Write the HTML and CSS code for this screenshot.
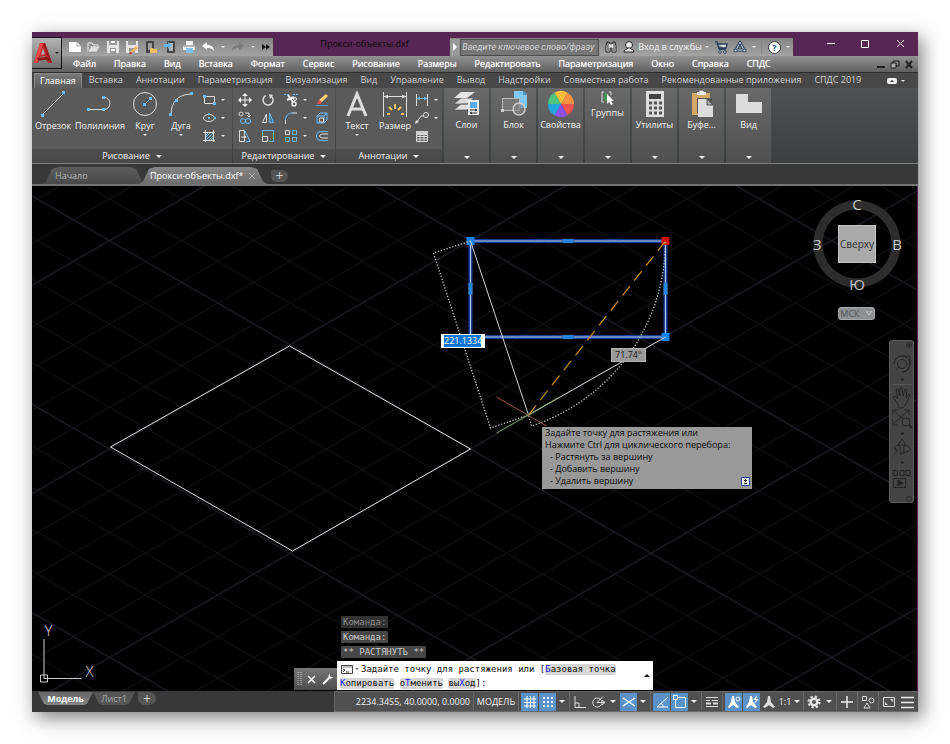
FILE: index.html
```html
<!DOCTYPE html>
<html lang="ru">
<head>
<meta charset="utf-8">
<title>Прокси-объекты.dxf</title>
<link rel="stylesheet" href="styles.css">
</head>
<body>
<div class="window">
  <header class="header">
    <button class="app-button" aria-label="Меню приложения">
      <svg width="20" height="24" viewBox="0 0 20 24"><path d="M7 2h5l7 20h-4l-3-7-5 1-2 6H1z" fill="#c4272b"/><path d="M7 2l3 1-6 19H1z" fill="#ee4a46"/><path d="M10 7l2 6-4 1z" fill="#a9a9a9"/><path d="M4 17c5 0 9-2 13 0l2 5c-4-4-9-3-13-2z" fill="#8e1519"/><path d="M12 2l7 20h-2L10 3z" fill="#951a1e"/></svg>
      <i class="caret dark"></i>
    </button>
    <div class="titlebar">
      <div class="quick">
        <button aria-label="Создать"><svg width="14" height="14" viewBox="0 0 14 14"><path d="M1 2h8l4 4v6H1z" fill="#fff"/><path d="M9 2v4h4" fill="none" stroke="#aaa"/></svg></button>
        <button aria-label="Открыть"><svg width="14" height="14" viewBox="0 0 14 14"><path d="M1 12V3h4l1 2h5v2" fill="none" stroke="#eee"/><path d="M1 12l3-6h9l-3 6z" fill="#ddd" stroke="#888" stroke-width=".5"/></svg></button>
        <button aria-label="Сохранить"><svg width="14" height="14" viewBox="0 0 14 14"><path d="M1 1h12v12H1z" fill="#e4e4e4"/><path d="M3 1h8v4H3zM4 8h6v5H4z" fill="#999"/><path d="M5 2h4M5 10h4" stroke="#fff" stroke-width="2"/></svg></button>
        <button aria-label="Сохранить как"><svg width="14" height="14" viewBox="0 0 14 14"><path d="M1 1h12v12H1z" fill="#e4e4e4"/><path d="M3 1h8v4H3zM4 8h6v5H4z" fill="#999"/><path d="M5 12l6-6 2 2-6 5z" fill="#f0b45c"/><path d="M5 12l2 1-1 1H4z" fill="#b33"/></svg></button>
        <button aria-label="Открыть с мобильных"><svg width="14" height="14" viewBox="0 0 14 14"><rect x="2" y="1" width="8" height="12" rx="1" fill="#444"/><path d="M4 3h4v7H4z" fill="#999"/><path d="M6 12V8h3l1 1h3v4H6z" fill="#f0bd62"/></svg></button>
        <button aria-label="Сохранить на мобильных"><svg width="14" height="14" viewBox="0 0 14 14"><rect x="4" y="1" width="8" height="12" rx="1" fill="#444"/><path d="M6 3h4v8H6z" fill="#b5b5b5"/><path d="M1 4h4V2l4 3-4 4V7H1z" fill="#5fb6f5"/></svg></button>
        <button aria-label="Печать"><svg width="14" height="14" viewBox="0 0 14 14"><path d="M4 1h7v4H4zM1 5h12v5H1z" fill="#f2f2f2"/><path d="M1 6h12" stroke="#777"/><path d="M4 8h7v5H4z" fill="#81c5f7"/></svg></button>
        <button aria-label="Отменить"><svg width="14" height="14" viewBox="0 0 14 14"><path d="M1 6l5-4v3c4 0 7 2 7 6-2-3-4-3-7-3v2z" fill="#fff"/></svg></button><i class="caret"></i>
        <button aria-label="Повторить"><svg width="14" height="14" viewBox="0 0 14 14"><path d="M13 6L8 2v3C4 5 1 7 1 11c2-3 4-3 7-3v2z" fill="#7c7c7c"/></svg></button><i class="caret"></i>
        <button aria-label="Ещё"><svg width="10" height="10" viewBox="0 0 10 10"><path d="M1 2l4 3-4 3zM5 2l4 3-4 3z" fill="#111"/></svg></button>
      </div>
      <h1 class="title">Прокси-объекты.dxf</h1>
      <div class="search">
        <button class="search-toggle" aria-label="Свернуть поиск"><svg width="5" height="8" viewBox="0 0 5 8"><path d="M0 0l4 4-4 4z" fill="#fff"/></svg></button>
        <input type="text" aria-label="Поиск" placeholder="Введите ключевое слово/фразу">
        <button aria-label="Найти"><svg width="14" height="14" viewBox="0 0 14 14"><path d="M2 6l1-4h2l1 2h2l1-2h2l1 4v6H8V8H6v4H2z" fill="#eee" stroke="#222"/><path d="M4 2v9M10 2v9" stroke="#222"/></svg></button>
        <button class="signin"><svg width="12" height="14" viewBox="0 0 12 14"><circle cx="6" cy="5" r="3.5" fill="#eee" stroke="#222"/><path d="M1 12c0-3 3-2 4-4h2c1 2 4 1 4 4z" fill="#eee" stroke="#222"/></svg><span>Вход в службы</span><i class="caret"></i></button>
        <button aria-label="Магазин"><svg width="14" height="14" viewBox="0 0 14 14"><path d="M1 2h2l2 7h7M4 4h9l-1 4H5" fill="#e5e5e5" stroke="#273a55" stroke-width="1.3"/><circle cx="6" cy="12" r="1.3" fill="#eee" stroke="#273a55"/><circle cx="11" cy="12" r="1.3" fill="#eee" stroke="#273a55"/></svg></button>
        <button aria-label="Autodesk"><svg width="14" height="14" viewBox="0 0 14 14"><path d="M7 3l4 7H3z" fill="none" stroke="#273a55" stroke-width="3"/><path d="M7 3l4 7H3z" fill="none" stroke="#dce5f2"/><circle cx="7" cy="3" r="1.5" fill="#dce5f2" stroke="#273a55"/><circle cx="2.500" cy="10.500" r="1.500" fill="#dce5f2" stroke="#273a55"/><circle cx="11.500" cy="10.500" r="1.500" fill="#dce5f2" stroke="#273a55"/></svg><i class="caret"></i></button>
        <button class="help" aria-label="Справка"><span>?</span><i class="caret"></i></button>
      </div>
      <div class="window-controls">
        <button aria-label="Свернуть"><svg width="9" height="9" viewBox="0 0 9 9"><path d="M1 3.500h8" stroke="#fff"/></svg></button>
        <button aria-label="Развернуть"><svg width="9" height="9" viewBox="0 0 9 9"><path d="M.5.5h7v7h-7z" fill="none" stroke="#fff"/></svg></button>
        <button aria-label="Закрыть"><svg width="9" height="9" viewBox="0 0 9 9"><path d="M1 0l7 7M8 0L1 7" stroke="#fff"/></svg></button>
      </div>
    </div>
    <nav class="menubar">
      <a href="#">Файл</a><a href="#">Правка</a><a href="#">Вид</a><a href="#">Вставка</a><a href="#">Формат</a><a href="#">Сервис</a><a href="#">Рисование</a><a href="#">Размеры</a><a href="#">Редактировать</a><a href="#">Параметризация</a><a href="#">Окно</a><a href="#">Справка</a><a href="#">СПДС</a>
      <div class="doc-controls">
        <button aria-label="Свернуть документ"><svg width="8" height="9" viewBox="0 0 8 9"><path d="M0 7h8" stroke="#222" stroke-width="2"/></svg></button>
        <button aria-label="Восстановить документ"><svg width="10" height="9" viewBox="0 0 10 9"><path d="M3 3V1h6v5H6" fill="none" stroke="#222"/><path d="M1 3h5v5H1z" fill="#aaa" stroke="#222"/></svg></button>
        <button aria-label="Закрыть документ"><svg width="8" height="9" viewBox="0 0 8 9"><path d="M1 1l6 7M7 1L1 8" stroke="#222" stroke-width="2"/></svg></button>
      </div>
    </nav>
  </header>

  <nav class="ribbon-tabs">
    <a class="active" href="#">Главная</a><a href="#">Вставка</a><a href="#">Аннотации</a><a href="#">Параметризация</a><a href="#">Визуализация</a><a href="#">Вид</a><a href="#">Управление</a><a href="#">Вывод</a><a href="#">Надстройки</a><a href="#">Совместная работа</a><a href="#">Рекомендованные приложения</a><a href="#">СПДС 2019</a>
    <button aria-label="Свернуть ленту"><svg width="10" height="6" viewBox="0 0 10 6"><rect width="10" height="6" rx="2" fill="#eee"/><path d="M3 4l2-2 2 2z" fill="#333"/></svg><i class="caret"></i></button>
  </nav>

  <section class="ribbon">
    <div class="panel draw">
      <div class="panel-body">
        <button class="tool w42"><svg width="26" height="26" viewBox="0 0 26 26"><path d="M2 24L24 2" stroke="#ddd"/><path d="M1 23h3v3H1zM22 0h3v3h-3z" fill="#6bbcff"/></svg><span>Отрезок</span></button>
        <button class="tool w52"><svg width="26" height="26" viewBox="0 0 26 26"><path d="M1 18.500h16a6 6 0 0 0 0-12" fill="none" stroke="#ddd"/><path d="M0 17h3v3H0zM15 17h3v3h-3zM15 5h3v3h-3z" fill="#6bbcff"/></svg><span>Полилиния</span></button>
        <button class="tool w38"><svg width="26" height="26" viewBox="0 0 26 26"><circle cx="13" cy="13" r="11.500" fill="none" stroke="#ddd"/><path d="M13 13l6-6" stroke="#6bbcff"/><path d="M11 12h3v3h-3zM17 6h3v3h-3z" fill="#6bbcff"/></svg><span>Круг</span><i class="caret"></i></button>
        <button class="tool w34"><svg width="26" height="26" viewBox="0 0 26 26"><path d="M3 24C3 11 10 3 24 3" fill="none" stroke="#ddd"/><path d="M1 22h3v3H1zM7 8h3v3H7zM22 1h3v3h-3z" fill="#6bbcff"/></svg><span>Дуга</span><i class="caret"></i></button>
        <div class="small-tools one">
          <button aria-label="Прямоугольник"><svg width="14" height="14" viewBox="0 0 14 14"><path d="M2.500 3.500h10v7h-10z" fill="none" stroke="#ddd"/><path d="M1 2h3v3H1zM11 9h3v3h-3z" fill="#6bbcff"/></svg><i class="caret"></i></button>
          <button aria-label="Эллипс"><svg width="14" height="14" viewBox="0 0 14 14"><ellipse cx="7" cy="7" rx="5.500" ry="3.500" fill="none" stroke="#ddd"/><path d="M6 6h2v2H6zM6 2h2v2H6zM12 6h2v2h-2z" fill="#6bbcff"/></svg><i class="caret"></i></button>
          <button aria-label="Штриховка"><svg width="14" height="14" viewBox="0 0 14 14"><path d="M3.500 1v12M11.500 1v12M1 3.500h12M1 11.500h12" stroke="#ddd"/><path d="M4 8l4-4M4 11l7-7M7 11l4-4M4 6l2-2M9 11l2-2" stroke="#6bbcff"/></svg><i class="caret"></i></button>
        </div>
      </div>
      <button class="panel-foot">Рисование<i class="caret big"></i></button>
    </div>

    <div class="panel edit">
      <div class="panel-body">
        <div class="small-tools four">
          <button aria-label="Переместить"><svg width="14" height="14" viewBox="0 0 14 14"><path d="M7 2v10M2 7h10" stroke="#eee"/><path d="M7 0l3 3H4zM7 14l3-3H4zM0 7l3-3v6zM14 7l-3-3v6z" fill="#eee"/></svg></button>
          <button aria-label="Повернуть"><svg width="14" height="14" viewBox="0 0 14 14"><path d="M10 3a5 5 0 1 1-5-.5" fill="none" stroke="#ddd" stroke-width="1.5"/><path d="M8 1l4 1-3 4z" fill="#ddd"/></svg></button>
          <button aria-label="Обрезать"><svg width="14" height="14" viewBox="0 0 14 14"><path d="M0 1.500h5M9 1.500h5" stroke="#6bbcff" stroke-dasharray="2 1"/><path d="M4 2l5 7M10 4L3 7" stroke="#eee" stroke-width="2"/><circle cx="10" cy="11" r="2" fill="none" stroke="#eee" stroke-width="1.500"/><circle cx="11" cy="6" r="1.500" fill="none" stroke="#eee"/></svg><i class="caret"></i></button>
          <button aria-label="Стереть"><svg width="14" height="14" viewBox="0 0 14 14"><path d="M11 1l2 2-6 6-3-2z" fill="#ffd07a"/><path d="M4 7l3 2-2 2H2z" fill="#f05050"/><path d="M1 12.500h12" stroke="#5c9ed4"/></svg></button>
          <button aria-label="Копировать"><svg width="14" height="14" viewBox="0 0 14 14"><circle cx="3" cy="3" r="2" fill="none" stroke="#ddd"/><path d="M7 2h4v4M9 4l2 2 2-2" fill="none" stroke="#ddd"/><circle cx="5" cy="10" r="2.500" fill="none" stroke="#6bbcff"/><circle cx="10" cy="10" r="2.500" fill="none" stroke="#6bbcff"/></svg></button>
          <button aria-label="Зеркало"><svg width="14" height="14" viewBox="0 0 14 14"><path d="M5.500 3v8.500h-4z" fill="none" stroke="#ddd"/><path d="M8.500 2v9.500h4z" fill="#3e6d94" stroke="#6bbcff"/></svg></button>
          <button aria-label="Сопряжение"><svg width="14" height="14" viewBox="0 0 14 14"><path d="M1.500 13V9" stroke="#ddd"/><path d="M1.500 9c0-4 3-7 7-7" fill="none" stroke="#6bbcff"/><path d="M8 2h5" stroke="#ddd"/></svg><i class="caret"></i></button>
          <button aria-label="Расчленить"><svg width="14" height="14" viewBox="0 0 14 14"><path d="M2 5h7v7H2zM2 5l3-3h7l-3 3M12 2v7l-3 3" fill="none" stroke="#6bbcff"/><path d="M4.500 7h4v4h-4z" fill="none" stroke="#ddd"/></svg></button>
          <button aria-label="Растянуть"><svg width="14" height="14" viewBox="0 0 14 14"><path d="M1.500 1.500h5v11h-5z" fill="none" stroke="#ddd"/><path d="M7 2l5 10.500H8" fill="none" stroke="#6bbcff"/><path d="M3 8h5M6 6l2 2-2 2" fill="none" stroke="#ddd"/></svg></button>
          <button aria-label="Масштаб"><svg width="14" height="14" viewBox="0 0 14 14"><path d="M1.500 7V1.500h11v11H8" fill="none" stroke="#6bbcff"/><path d="M1.500 7.500h5v5h-5z" fill="none" stroke="#ddd"/></svg></button>
          <button aria-label="Массив"><svg width="14" height="14" viewBox="0 0 14 14"><path d="M1.500 1.500h4v4h-4z" fill="none" stroke="#ddd"/><path d="M8.500 1.500h4v4h-4zM1.500 8.500h4v4h-4zM8.500 8.500h4v4h-4z" fill="none" stroke="#6bbcff"/></svg><i class="caret"></i></button>
          <button aria-label="Подобие"><svg width="14" height="14" viewBox="0 0 14 14"><path d="M13 2.500H6c-6 0-6 9 0 9h7" fill="none" stroke="#6bbcff"/><path d="M13 5H7c-3 0-3 4 0 4h6" fill="none" stroke="#ddd"/></svg></button>
        </div>
      </div>
      <button class="panel-foot">Редактирование<i class="caret big"></i></button>
    </div>

    <div class="panel annot">
      <div class="panel-body">
        <button class="tool w38"><svg width="26" height="26" viewBox="0 0 26 26"><path d="M4 25L13 3l9 22M7 18h12" fill="none" stroke="#ddd" stroke-width="3"/></svg><span>Текст</span><i class="caret"></i></button>
        <button class="tool w38"><svg width="26" height="26" viewBox="0 0 26 26"><path d="M1.500 1v25M24.500 1v25M2 5.500h22" stroke="#ddd"/><path d="M2 5.500l4-2v4zM24 5.500l-4-2v4z" fill="#ddd"/><path d="M5 23h3M19 23h3M7 16l3 3M19 16l-3 3M13 13v5" stroke="#ffc564" stroke-width="2"/></svg><span>Размер</span></button>
        <div class="small-tools one">
          <button aria-label="Линейный размер"><svg width="14" height="14" viewBox="0 0 14 14"><path d="M1.500 1v12M12.500 1v12" stroke="#ddd"/><path d="M2 5.500h10" stroke="#6bbcff"/><path d="M2 5.500l3-2v4zM12 5.500l-3-2v4z" fill="#6bbcff"/></svg><i class="caret"></i></button>
          <button aria-label="Выноска"><svg width="14" height="14" viewBox="0 0 14 14"><path d="M2 11l4-6h3" fill="none" stroke="#ddd"/><circle cx="11" cy="4" r="2.500" fill="none" stroke="#ddd"/><path d="M0 13l1-4 3 2z" fill="#ddd"/></svg><i class="caret"></i></button>
          <button aria-label="Таблица"><svg width="14" height="14" viewBox="0 0 14 14"><path d="M1.500 2.500h11v10h-11zM1 5.500h12M1 7.500h12M1 10h12M5 5v7M9 5v7" fill="none" stroke="#ddd"/><path d="M1 2h12v3H1z" fill="#ccc"/></svg></button>
        </div>
      </div>
      <button class="panel-foot">Аннотации<i class="caret big"></i></button>
    </div>

    <button class="group"><svg width="28" height="28" viewBox="0 0 28 28"><path d="M8 14h13l-7 6H1zM8 8h13l-7 6H1z" fill="#ddd" stroke="#555" stroke-width=".7"/><path d="M8 2h14l-8 6H1z" fill="#e5e5e5"/><path d="M15 10h11v15H15z" fill="#eee"/><path d="M17 12h7v6h-7z" fill="#58aef0"/><path d="M17 20h7M22 19l2 1-2 1M24 23h-7M19 22l-2 1 2 1" stroke="#333" fill="none"/></svg><span>Слои</span><i class="caret big"></i></button>
    <button class="group"><svg width="28" height="28" viewBox="0 0 28 28"><path d="M14 1h9l4 4v13H14z" fill="#80c9fa"/><path d="M23 1v4h4" fill="#4a95c9"/><path d="M2.500 8.500h17v12h-17z" fill="#777" stroke="#bbb"/><circle cx="19" cy="19" r="6" fill="#888a" stroke="#ccc" stroke-width="1.500"/><path d="M1 19h3v3H1z" fill="#ccc"/></svg><span>Блок</span><i class="caret big"></i></button>
    <button class="group"><svg width="28" height="28" viewBox="0 0 28 28"><path d="M14 14L7.500 2.700a13 13 0 0 1 13 0z" fill="#f9bd3e"/><path d="M14 14l6.500-11.300A13 13 0 0 1 27 14z" fill="#fb9040"/><path d="M14 14h13a13 13 0 0 1-6.500 11.300z" fill="#ee5350"/><path d="M14 14l6.500 11.300a13 13 0 0 1-13 0z" fill="#8e50e8"/><path d="M14 14L7.500 25.300A13 13 0 0 1 1 14z" fill="#21a5de"/><path d="M14 14H1A13 13 0 0 1 7.500 2.700z" fill="#4fc47b"/></svg><span>Свойства</span><i class="caret big"></i></button>
    <button class="group"><svg width="16" height="16" viewBox="0 0 16 16"><path d="M4 2H2v10h2M9 2h2v3" fill="none" stroke="#ddd"/><circle cx="6" cy="5" r="2" fill="#3d9c59"/><circle cx="6" cy="9" r="2" fill="#3d9c59"/><path d="M7 4v10l2-2 2 3 2-1-2-3h3z" fill="#fff"/></svg><span>Группы</span><i class="caret big"></i></button>
    <button class="group"><svg width="28" height="28" viewBox="0 0 28 28"><path d="M5 1h18v26H5z" fill="#ddd"/><path d="M8 4h12v5H8z" fill="#444"/><path d="M8 13h3M13 13h3M18 13h3M8 18h3M13 18h3M18 18h3M8 23h3M13 23h3M18 23h3" stroke="#555" stroke-width="3"/></svg><span>Утилиты</span><i class="caret big"></i></button>
    <button class="group"><svg width="28" height="28" viewBox="0 0 28 28"><path d="M4 3h18v22H4z" fill="#d6a666"/><path d="M9 5V2h2c1-2 4-2 5 0h2v3z" fill="#eee"/><path d="M9 8h15v15H9z" fill="#555"/><path d="M10 9h9l6 6v12H10z" fill="#ddd"/><path d="M19 9v6h6z" fill="#aaa" stroke="#555"/></svg><span>Буфе...</span><i class="caret big"></i></button>
    <button class="group"><svg width="28" height="28" viewBox="0 0 28 28"><path d="M1 4h12v8h14v11H1z" fill="#dcdcdc"/></svg><span>Вид</span><i class="caret big"></i></button>
  </section>

  <nav class="file-tabs">
    <a class="file-tab" href="#">Начало</a>
    <a class="file-tab active" href="#">Прокси-объекты.dxf*<svg width="6" height="6" viewBox="0 0 6 6"><path d="M0 0l6 6M6 0L0 6" stroke="#aaa"/></svg></a>
    <button class="add-file" aria-label="Новый чертёж">+</button>
  </nav>

  <main class="viewport">
    <svg class="drawing" viewBox="32 186 886 505" preserveAspectRatio="xMidYMid slice">
      <defs>
        <pattern id="minor" x="471" y="449" width="72.200" height="41.680" patternUnits="userSpaceOnUse"><path d="M0 0L72.200 41.680M0 41.680L72.200 0" stroke="#121217"/></pattern>
        <pattern id="major" x="471" y="449" width="361" height="208.400" patternUnits="userSpaceOnUse"><path d="M0 0L361 208.400M0 208.400L361 0" stroke="#1f1f2b"/></pattern>
      </defs>
      <rect x="32" y="186" width="886" height="505" fill="url(#minor)"/>
      <rect x="32" y="186" width="886" height="505" fill="url(#major)"/>
      <path d="M290 346L471 449 293 551 111 447z" fill="none" stroke="#e2e2e2"/>
      <path d="M471 241h195v96H471z" fill="none" stroke="#1b3f8e" stroke-width="4"/>
      <path d="M471 241h195v96H471z" fill="none" stroke="#b9d0f5"/>
      <path d="M563 239h11v4h-11zM563 335h11v4h-11zM469 283h4v12h-4zM664 283h4v12h-4z" fill="#2188e6" stroke="#456" stroke-width=".5"/>
      <path d="M467 237h8v8h-8zM662 333h8v8h-8z" fill="#1583ee"/>
      <path d="M662 237h8v8h-8z" fill="#d50b0b"/>
      <path d="M471 241l58 174 137-78" fill="none" stroke="#d5d5d5"/>
      <path d="M529 415L666 241" stroke="#c08a20" stroke-width="1.300" stroke-dasharray="12 7"/>
      <path d="M471 241l-37 12 57 175 38-13 3 11A195 195 0 0 0 666 241" fill="none" stroke="#c4c4c4" stroke-width="1.300" stroke-dasharray="1.300 1.700"/>
      <path d="M497 397l50 29" stroke="#9a5d4b"/>
      <path d="M497 433l63-36" stroke="#7e9c67"/>
      <path d="M44.500 639v39M44 678.500h38M41 675h7v7h-7z" fill="none" stroke="#ccc"/>
      <text class="axis" x="45" y="636">Y</text>
      <text class="axis" x="86" y="677">X</text>
    </svg>

    <div class="viewcube">
      <b class="north">С</b><b class="west">З</b><button>Сверху</button><b class="east">В</b><b class="south">Ю</b>
    </div>
    <button class="ucs">МСК<svg width="8" height="5" viewBox="0 0 8 5"><path d="M1 0h6L4 4z" fill="none" stroke="#c5c9d0"/></svg></button>

    <div class="navbar">
      <svg viewBox="0 0 24 162" width="24" height="162" fill="none" stroke="#262626">
        <circle cx="19" cy="4" r="2.500"/><path d="M18 3l2 2M20 3l-2 2"/>
        <path d="M4 23a8 8 0 1 1 8 8M12 15h8v8a8 8 0 0 1-8 8"/><circle cx="12" cy="23" r="4.500"/><path d="M9 26l-3 3"/>
        <path d="M11 38h3l-1.500 2zM11 92h3l-1.500 2zM11 121h3l-1.500 2z" fill="#222"/><path d="M2 43.500h20" stroke="#555"/>
        <path d="M8 63l-5-7 2-1 3 3-2-9 2-1 2 7 0-8h2l1 8 2-7 2 1-1 8 3-4 1 1-4 9-3 4H9z"/>
        <path d="M4 70l14 12M18 70L3 83M3 74v-5h5M14 69h5v5M3 79v5h5"/><circle cx="16" cy="81" r="4" fill="#454545"/><path d="M19 84l3 3" stroke-width="2"/>
        <path d="M10 113v-9H8l4-6 4 6h-2v9zM8 110c-10-4 4-9 11-4 4 4-4 6-8 5M4 106l4 4-4 3"/>
        <path d="M3.500 129.500h4v5h-4zM10 129.500h4v5h-4zM16 129.500h4v5h-4zM3.500 137.500h12v9h-12z"/><path d="M8 139l5 3-5 3z" fill="#222"/><circle cx="19" cy="158" r="2.500"/>
      </svg>
    </div>

    <label class="distance"><input type="text" value="221.1334" aria-label="Расстояние"></label>
    <output class="angle">71.74°</output>
    <div class="hint">
      <p>Задайте точку для растяжения или</p>
      <p>Нажмите Ctrl для циклического перебора:</p>
      <ul><li>- Растянуть за вершину</li><li>- Добавить вершину</li><li>- Удалить вершину</li></ul>
      <svg width="9" height="9" viewBox="0 0 9 9"><path d="M.5.5h8v8h-8z" fill="#eee" stroke="#25408c"/><path d="M4.500 2v3M3 3.500h3M3 6.500h3" stroke="#222"/></svg>
    </div>

    <div class="console">
      <div class="console-handle">
        <svg width="5" height="14" viewBox="0 0 5 14"><path d="M1 0v14M4 0v14" stroke="#ccc" stroke-dasharray="1 1"/></svg>
        <button aria-label="Закрыть"><svg width="9" height="9" viewBox="0 0 9 9"><path d="M1 1l7 7M8 1L1 8" stroke="#fff" stroke-width="1.500"/></svg></button>
        <button aria-label="Настройка"><svg width="12" height="12" viewBox="0 0 12 12"><path d="M1 11l6-6" stroke="#fff" stroke-width="2"/><path d="M8 1c-2 1-2 3-1 4s3 1 4-1L9 4 8 3z" fill="#fff"/></svg></button>
      </div>
      <div class="console-main">
        <span class="log faded">Команда:</span>
        <span class="log">Команда:</span>
        <span class="log">** РАСТЯНУТЬ **</span>
        <div class="prompt">
          <p><svg width="20" height="10" viewBox="0 0 20 10"><path d="M.5.500h11v8H.500z" fill="#fff" stroke="#444"/><path d="M1 2h10" stroke="#888"/><path d="M2 4l2 1-2 2M5 7h3" fill="none" stroke="#333"/><path d="M14 3h4l-2 2z" fill="#777"/></svg>Задайте точку для растяжения или [<button><em>Б</em>азовая точка</button> <button><em>К</em>опировать</button> <button>о<em>Т</em>менить</button> <button>вы<em>Х</em>од</button>]:</p>
          <button class="expand" aria-label="История"><i class="caret up"></i></button>
        </div>
      </div>
    </div>
  </main>

  <footer class="statusbar">
    <nav class="layouts"><a class="active" href="#">Модель</a><a href="#">Лист1</a><button aria-label="Новый лист">+</button></nav>
    <div class="status">
      <div class="cell coords">2234.3455, 40.0000, 0.0000</div>
      <div class="cell"><button class="model">МОДЕЛЬ</button></div>
      <div class="cell">
        <button class="on" aria-label="Сетка"><svg width="14" height="14" viewBox="0 0 14 14"><path d="M4 1v12M7.500 1v12M11 1v12M1 4h12M1 7.500h12M1 11h12" stroke="#fff"/></svg></button>
        <button class="on" aria-label="Шаг"><svg width="14" height="14" viewBox="0 0 14 14"><path d="M2 3h12M2 7h12M2 11h12" stroke="#fff" stroke-width="2" stroke-dasharray="2 2"/></svg></button>
        <button class="drop" aria-label="Параметры шага"><i class="caret big"></i></button>
      </div>
      <div class="cell">
        <button aria-label="Орто"><svg width="14" height="14" viewBox="0 0 14 14"><path d="M2 1v11.500h11M2 8h4v4" fill="none" stroke="#ddd"/></svg></button>
        <button aria-label="Полярное"><svg width="14" height="14" viewBox="0 0 14 14"><path d="M9 4a4.500 4.500 0 1 0 1 6M6 7.500h8M6 7.500l6-6M9 4c2 1 3 4 1 6M11 5l3 2.500-3 2.500" fill="none" stroke="#ddd"/></svg></button>
        <button class="drop" aria-label="Углы"><i class="caret big"></i></button>
        <button class="on" aria-label="Изометрия"><svg width="14" height="14" viewBox="0 0 14 14"><path d="M1 3l12 8M13 3L1 11" stroke="#fff" stroke-width="1.500"/></svg></button>
        <button class="drop" aria-label="Плоскость"><i class="caret big"></i></button>
      </div>
      <div class="cell">
        <button class="on" aria-label="Отслеживание"><svg width="14" height="14" viewBox="0 0 14 14"><path d="M13 2L2 12h11M6 8l3 4" fill="none" stroke="#fff"/></svg></button>
        <button class="on" aria-label="Привязка"><svg width="14" height="14" viewBox="0 0 14 14"><path d="M2.500 2.500h10v10h-10z" fill="none" stroke="#fff"/><path d="M.5.5h4v4h-4z" fill="#5b92c9" stroke="#fff"/></svg></button>
        <button class="drop" aria-label="Параметры привязки"><i class="caret big"></i></button>
      </div>
      <div class="cell"><button aria-label="Вес линий"><svg width="14" height="14" viewBox="0 0 14 14"><path d="M1 2.500h12M1 5.500h4M7 5.500h6M1 11.500h12" stroke="#ddd"/><path d="M1 8.500h5M8 8.500h5" stroke="#ddd" stroke-width="2"/></svg></button></div>
      <div class="cell">
        <button class="on" aria-label="Видимость аннотаций"><svg width="14" height="14" viewBox="0 0 14 14"><path d="M5 1h2l1 6 4 5-2 1-4-3-4 3-1-1 3-5z" fill="#fff"/><circle cx="11" cy="4" r="2" fill="none" stroke="#fff"/></svg></button>
        <button class="on" aria-label="Автомасштаб"><svg width="14" height="14" viewBox="0 0 14 14"><path d="M5 1h2l1 6 4 5-2 1-4-3-4 3-1-1 3-5z" fill="#fff"/><path d="M12 0L8 5h3l-2 4 5-5h-3z" fill="#fff"/></svg></button>
        <button class="scale"><svg width="14" height="14" viewBox="0 0 14 14"><path d="M6 1h2l1 6 4 5-2 1-4-3-4 3-2-1 4-5z" fill="#ddd"/></svg><span>1:1</span><i class="caret big"></i></button>
      </div>
      <div class="cell">
        <button aria-label="Рабочее пространство"><svg width="14" height="14" viewBox="0 0 14 14"><circle cx="7" cy="7" r="3.300" fill="none" stroke="#e5e5e5" stroke-width="2.500"/><circle cx="7" cy="7" r="5.500" fill="none" stroke="#e5e5e5" stroke-width="2" stroke-dasharray="2.300 2.020"/></svg></button>
        <button class="drop" aria-label="Пространства"><i class="caret big"></i></button>
      </div>
      <div class="cell"><button aria-label="Монитор аннотаций"><svg width="14" height="14" viewBox="0 0 14 14"><path d="M7 1v12M1 7h12" stroke="#eee" stroke-width="1.500"/></svg></button></div>
      <div class="cell"><button aria-label="Изоляция"><svg width="14" height="14" viewBox="0 0 14 14"><path d="M1.500 1.500h4v4h-4zM6 8l3 5H3z" fill="none" stroke="#ddd"/><circle cx="10.500" cy="5.500" r="2.500" fill="none" stroke="#ddd"/></svg></button></div>
      <div class="cell">
        <button aria-label="Очистить экран"><svg width="14" height="14" viewBox="0 0 14 14"><path d="M1.500 2.500h11v9h-11z" fill="none" stroke="#ddd"/><path d="M8 4h3v3zM3 7v3h3z" fill="#ddd"/></svg></button>
        <button aria-label="Настройка"><svg width="14" height="14" viewBox="0 0 14 14"><path d="M1 2.500h13M1 7.500h13M1 12.500h13" stroke="#eee" stroke-width="1.500"/></svg></button>
      </div>
    </div>
  </footer>
</div>
</body>
</html>
```
FILE: styles.css
```css
* { box-sizing: border-box; }

body {
  margin: 0;
  padding: 32px;
  height: 100vh;
  background: #fff;
  font: 9px/12px "Open Sans", "Noto Sans", sans-serif;
  color: #f0f0f0;
}

button, input { font: inherit; color: inherit; margin: 0; padding: 0; border: 0; background: none; }
button { display: flex; align-items: center; justify-content: center; white-space: nowrap; }
a { color: inherit; text-decoration: none; white-space: nowrap; }
p, ul, h1 { margin: 0; padding: 0; list-style: none; }
svg { display: block; flex: none; }

.caret { flex: none; width: 0; height: 0; border: 2px solid transparent; border-top-color: #eee; border-bottom: 0; }
.caret.big { border-width: 3px; border-bottom: 0; }
.caret.dark { border-top-color: #222; }
.caret.up { border: 3px solid transparent; border-top: 0; border-bottom-color: #111; }

.window {
  display: flex;
  flex-direction: column;
  height: 100%;
  min-height: 600px;
  background: #3a3a3a;
  box-shadow: 4px 6px 18px rgba(0, 0, 0, .5);
}

/* Title bar and menu */
.header { position: relative; background: #582654; }
.app-button {
  position: absolute; left: 0; top: 5px; width: 30px; height: 32px;
  border: 1px solid #151515; border-left: 0;
  background: linear-gradient(#b5b5b5, #6d6d6d);
  justify-content: space-between; padding: 0 2px 0 1px;
}
.titlebar { display: flex; align-items: flex-end; height: 24px; padding-left: 30px; }
.quick { display: flex; align-items: center; height: 18px; padding: 0 2px 0 6px; gap: 5px; background: linear-gradient(#858585, #a3a3a3); }
.quick .caret { margin: 0 1px; }
.title { flex: 1; font-size: 9px; line-height: 18px; font-weight: 400; color: #0c050c; text-align: center; padding: 0 0 3px 6px; }
.search { display: flex; align-items: center; height: 18px; gap: 5px; padding-right: 3px; background: linear-gradient(#858585, #a3a3a3); }
.search-toggle { width: 10px; height: 17px; background: #999; margin-right: -5px; }
.search input { width: 139px; height: 17px; padding: 0 1px; border: 1px solid #4c4c4c; background: #777; font-family: Roboto, sans-serif; font-style: italic; }
.search input::placeholder { color: #d2d2d2; opacity: 1; }
.search button { gap: 5px; }
.search .signin { gap: 3px; }
.help { border-left: 1px solid #888; padding-left: 6px; }
.help span { width: 13px; height: 13px; border: 1px solid #333; border-radius: 7px; background: #fff; color: #1c4d9d; font-weight: 700; line-height: 11px; }
.window-controls { display: flex; align-self: center; margin-left: 20px; }
.window-controls button { width: 35px; height: 20px; }
.menubar {
  display: flex; align-items: center; gap: 18px; height: 16px; padding: 0 5px 0 41px;
  background: linear-gradient(#929292, #606060); color: #fff; text-shadow: 0 0 1px #ddd;
}
.doc-controls { display: flex; gap: 5px; margin-left: auto; }

/* Ribbon */
.ribbon-tabs { display: flex; gap: 1px; align-items: flex-end; height: 16px; padding: 0 13px 0 2px; border-top: 1px solid #2e2e2e; background: #484848; color: #d0d0d0; }
.ribbon-tabs a { padding: 0 6px; height: 15px; line-height: 14px; }
.ribbon-tabs .active { background: linear-gradient(#787878, #5c5c5c); border: 1px solid #8a8a8a; border-bottom: 0; padding: 0 5px; color: #fff; line-height: 13px; }
.ribbon-tabs button { height: 15px; gap: 4px; margin-left: auto; }
.ribbon { display: flex; gap: 2px; height: 76px; border-bottom: 1px solid #808080; background: linear-gradient(#4f5252, #3c3f3f); }
.panel { display: flex; flex-direction: column; justify-content: space-between; background: #5a5a5a; margin-right: -1px; }
.panel.annot { margin-right: 0; }
.panel-body { display: flex; padding-top: 3px; height: 60px; }
.panel-foot { height: 14px; gap: 6px; background: linear-gradient(#4e4e4e, #484848); }
.draw { width: 200px; }
.edit { width: 102px; }
.annot { width: 106px; }
.annot .panel-body { padding-left: 2px; }
.tool { flex: none; flex-direction: column; justify-content: flex-start; }
.tool span { line-height: 14px; margin-top: 2px; }
.tool .caret { margin-top: 1px; }
.w42 { width: 42px; }
.w52 { width: 52px; }
.w38 { width: 38px; }
.w34 { width: 34px; }
.small-tools { display: grid; grid-auto-rows: 18px; }
.small-tools button { justify-content: flex-start; gap: 5px; }
.one { grid-template-columns: 23px; padding-left: 4px; }
.annot .one { padding-left: 1px; }
.four { grid-template-columns: 23px 23px 31px 20px; padding-left: 5px; }
.group { flex-direction: column; justify-content: flex-start; width: 45px; padding: 2px 0; background: linear-gradient(#696969, #505050); }
.group span { line-height: 13px; }
.group .caret { margin: auto 0 2px; }

/* Drawing tabs */
.file-tabs { display: flex; align-items: flex-end; height: 22px; padding-left: 10px; border-bottom: 2px solid #737373; background: #383838; }
.file-tab {
  display: flex; align-items: center; height: 17px; width: 104px; padding: 0 13px; color: #b4b4b4;
  background: linear-gradient(#5c5c5c, #494949);
  clip-path: polygon(0 100%, 4px 85%, 10px 10%, 16px 0, calc(100% - 16px) 0, calc(100% - 10px) 10%, calc(100% - 4px) 85%, 100% 100%);
}
.file-tab.active { width: 128px; margin-left: -7px; padding: 0 11px; background: linear-gradient(#858585, #6d6d6d); color: #fff; gap: 6px; }
.add-file, .layouts button { color: #ccc; font-size: 14px; background: #555; }
.add-file { width: 17px; height: 12px; margin: 0 0 2px 4px; border-radius: 2px 7px 7px 7px; }

/* Drawing area */
.viewport { position: relative; flex: 1; overflow: hidden; background: #000; border-right: 1px solid #582654; }
.drawing { position: absolute; inset: 0; width: 100%; height: 100%; }
.axis { font: 300 15px "Open Sans", sans-serif; fill: #ddd; }
.viewcube {
  position: absolute; right: 10px; top: 8px; width: 100px; height: 100px;
  display: grid; grid-template: 20px 60px 20px / 20px 60px 20px; place-items: center;
  background: radial-gradient(circle, transparent 34px, #2d2d2d 35px, #2d2d2d 43px, transparent 44px);
  font-size: 15px; color: #c4c4c4;
}
.viewcube b { font-weight: 400; }
.north, .south { grid-column: 1 / 4; }
.viewcube button { width: 38px; height: 38px; border: 1px solid #c4c4c4; background: #aaa; color: #303030; font-size: 10px; }
.ucs { position: absolute; right: 42px; top: 121px; width: 37px; height: 13px; gap: 5px; border: 1px solid #aaa; border-radius: 3px; background: #8d9095; color: #555; }
.navbar { position: absolute; right: 3px; top: 154px; width: 25px; height: 163px; border: 1px solid #5b5b5b; border-radius: 3px; background: #444; }
.distance { position: absolute; left: 409px; top: 148px; width: 44px; padding: 1px 3px; background: #fff; }
.distance input { display: block; width: 37px; height: 12px; background: #0b75d6; color: #fff; }
.angle { position: absolute; left: 579px; top: 162px; width: 35px; padding: 0 3px; border: 1px solid #b4b4b4; background: #999; color: #111; }
.hint { position: absolute; left: 510px; top: 241px; width: 210px; height: 62px; padding: 0 3px; background: #999; color: #080808; }
.hint li { padding-left: 5px; }
.hint svg { position: absolute; right: 2px; bottom: 3px; }

.console { position: absolute; left: 262px; bottom: 1px; display: flex; align-items: flex-end; font: 9px/12px "DejaVu Sans Mono", monospace; }
.console-handle { display: flex; align-items: center; justify-content: space-around; width: 43px; height: 22px; background: linear-gradient(#777, #4b4b4b); }
.console-main { width: 316px; display: flex; flex-direction: column; align-items: flex-start; gap: 3px; }
.log { margin-left: 4px; padding: 0 2px; background: #464646; color: #ccc; border-radius: 1px; }
.faded { background: #333; color: #888; }
.prompt { display: flex; width: 100%; height: 29px; background: #fff; color: #111; }
.prompt p { flex: 1; padding: 1px 0 0 3px; line-height: 14px; }
.prompt p > svg { display: inline-block; vertical-align: middle; margin: 0 0 0 1px; }
.prompt p button { display: inline; background: #d6d6d6; border-radius: 2px; line-height: 11px; }
.prompt em { font-style: normal; color: #1616e8; }
.expand { width: 12px; }

/* Status bar */
.statusbar { display: flex; justify-content: space-between; height: 21px; background: #383838; }
.layouts { display: flex; align-items: flex-start; padding: 1px 0 0 6px; }
.layouts a { width: 55px; line-height: 13px; text-align: center; color: #aaa; background: #555; clip-path: polygon(0 0, 100% 0, calc(100% - 6px) 90%, calc(100% - 9px) 100%, 9px 100%, 6px 90%); }
.layouts .active { background: linear-gradient(#676767, #858585); color: #fff; font-weight: 700; }
.layouts a + a { width: 42px; }
.layouts button { width: 18px; height: 13px; margin-left: 3px; border-radius: 0 7px 7px 7px; }
.status { display: flex; padding-right: 1px; background: #505050; }
.cell { display: flex; align-items: center; padding: 0 1px; border: 1px solid #696969; border-right-width: 0; }
.cell button { width: 18px; height: 18px; }
.cell .on { background: #5b92c9; border-left: 1px solid #505050; }
.cell .drop { width: 12px; }
.cell .model { width: 42px; }
.cell .scale { width: 42px; gap: 3px; }
.coords { width: 139px; justify-content: flex-end; padding-right: 3px; white-space: nowrap; }
```
